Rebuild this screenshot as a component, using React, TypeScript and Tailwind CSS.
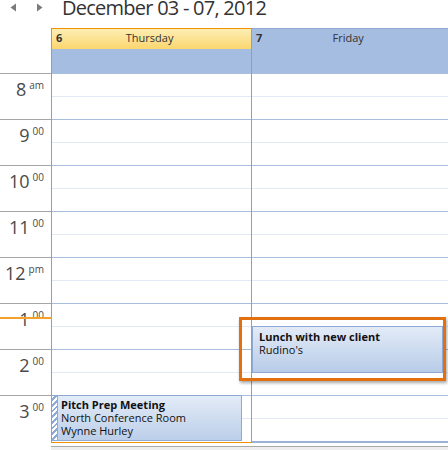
const HOURS = [
  { n: '8', s: 'am' },
  { n: '9', s: '00' },
  { n: '10', s: '00' },
  { n: '11', s: '00' },
  { n: '12', s: 'pm' },
  { n: '1', s: '00' },
  { n: '2', s: '00' },
  { n: '3', s: '00' },
];

function HourRows() {
  return (
    <>
      {HOURS.map((h) => (
        <div key={h.n} className="h-[46px] border-t border-[#a9bedf] flex flex-col">
          <div className="h-[22px]" />
          <div className="border-t border-[#e2e9f4]" />
        </div>
      ))}
    </>
  );
}

function EventText({ lines }: { lines: string[] }) {
  return (
    <div className="text-[11px] leading-[13px] text-[#111]">
      {lines.map((l, i) => (
        <div key={l} className={i === 0 ? 'font-bold' : ''}>
          {l}
        </div>
      ))}
    </div>
  );
}

export default function App() {
  return (
    <div
      className="relative w-[448px] h-[450px] overflow-hidden bg-white"
      style={{ fontFamily: '"Open Sans", "Noto Sans", sans-serif' }}
    >
      {/* Barra titolo */}
      <div className="h-[28px] flex items-start">
        <div className="flex gap-[19px] pl-[10px] pt-[3px]">
          <svg width="7" height="9" viewBox="0 0 7 9" aria-hidden="true">
            <path d="M6 0.5v8L0.5 4.5z" fill="#7b7b7b" />
          </svg>
          <svg width="7" height="9" viewBox="0 0 7 9" aria-hidden="true">
            <path d="M1 0.5v8L6.5 4.5z" fill="#7b7b7b" />
          </svg>
        </div>
        <h1 className="ml-[19px] text-[20px] leading-[15px] text-[#333] tracking-[-0.75px]">
          December 03 - 07, 2012
        </h1>
      </div>

      <div className="flex">
        {/* Colonna ore */}
        <div className="w-[51px] shrink-0">
          <div className="h-[45px]" />
          {HOURS.map((h) => (
            <div key={h.n} className="h-[46px] border-t border-[#a6a6a6] flex justify-end pr-[7px] pt-[5px] text-[#4a4a4a]">
              <span className="text-[18px] leading-[20px]">{h.n}</span>
              <span className="ml-[3px] text-[10px] leading-[12px]">{h.s}</span>
            </div>
          ))}
        </div>

        {/* Giovedì (oggi) */}
        <div className="w-[201px] shrink-0 border border-[#f29100] relative">
          <div className="h-[20px] bg-gradient-to-b from-[#fdeeb4] to-[#fbd66c] flex items-start pt-[1px] px-[4px] text-[11px] leading-[16px] text-[#333]">
            <span className="font-bold">6</span>
            <span className="flex-1 text-center pr-[10px]">Thursday</span>
          </div>
          <div className="h-[24px] bg-[#a5bde0]" />
          <HourRows />
          <div className="absolute left-0 top-[366px] w-[190px] h-[46px] flex border border-[#8fa9d5] border-l-0 bg-gradient-to-b from-[#e3ebf7] to-[#bccfe9]">
            <div className="w-[6px] shrink-0 bg-[repeating-linear-gradient(135deg,#ffffff_0px,#ffffff_2px,#8faad6_2px,#8faad6_4px)] border-r border-[#8fa9d5]" />
            <div className="pl-[3px] pt-[2px]">
              <EventText lines={['Pitch Prep Meeting', 'North Conference Room', 'Wynne Hurley']} />
            </div>
          </div>
          {/* contorno del giorno corrente */}
          <div className="pointer-events-none absolute -inset-px border border-[#f29100]" />
        </div>

        {/* Venerdì */}
        <div className="flex-1 relative border-b-2 border-[#9cb3d6]">
          <div className="h-[45px] bg-[#a5bde0] border-t border-[#8ea9d3] flex items-start pt-[1px] px-[4px] text-[11px] leading-[16px] text-[#333]">
            <span className="font-bold">7</span>
            <span className="flex-1 text-center pr-[10px]">Friday</span>
          </div>
          <HourRows />
          <div className="absolute left-0 top-[298px] w-[191px] h-[47px] border border-[#8fa9d5] bg-gradient-to-b from-[#e3ebf7] to-[#b8cce8] pl-[6px] pt-[3px]">
            <EventText lines={['Lunch with new client', "Rudino's"]} />
          </div>
        </div>
      </div>

      {/* Barra di scorrimento */}
      <div className="ml-[51px] mt-[3px] h-[5px] border-t border-[#a9a9a9] bg-[#eeeeee]" />

      {/* Linea ora corrente */}
      <div className="absolute left-0 top-[317px] w-[52px] h-[2px] bg-[#f4a129]" />

      {/* Riquadro evidenziato */}
      <div className="absolute left-[239px] top-[317px] w-[207px] h-[64px] border-[3px] border-[#e3700f] shadow-[1px_2px_3px_rgba(0,0,0,0.35)]" />
    </div>
  );
}
